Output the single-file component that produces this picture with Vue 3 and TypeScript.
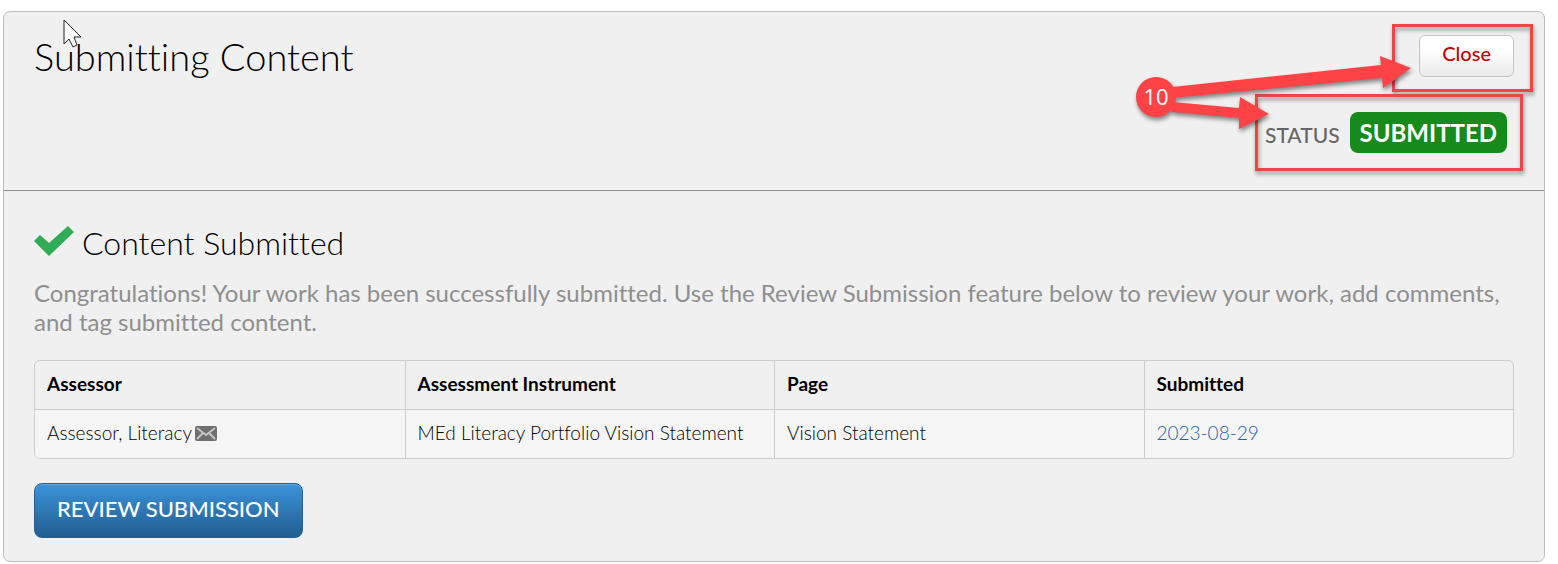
<script setup lang="ts">
interface Submission {
  assessor: string
  instrument: string
  page: string
  submitted: string
}

const columns: string[] = ['Assessor', 'Assessment Instrument', 'Page', 'Submitted']

const submissions: Submission[] = [
  {
    assessor: 'Assessor, Literacy',
    instrument: 'MEd Literacy Portfolio Vision Statement',
    page: 'Vision Statement',
    submitted: '2023-08-29',
  },
]
</script>

<template>
  <main class="panel">
    <header class="panel-header">
      <h1 class="title">Submitting Content</h1>
      <div class="actions">
        <button type="button" class="close">Close</button>
        <div class="status">
          <span class="status-label">STATUS</span>
          <strong class="badge">SUBMITTED</strong>
        </div>
      </div>
    </header>

    <section class="body">
      <h2 class="subtitle">
        <svg class="check" width="40" height="32" viewBox="0 0 40 32" aria-hidden="true">
          <path d="M0 16 L6 10 L15 18 L34 1 L40 7 L15 31 Z" fill="#2fac55" />
        </svg>
        <span>Content Submitted</span>
      </h2>
      <p class="message">
        Congratulations! Your work has been successfully submitted. Use the Review Submission
        feature below to review your work, add comments, and tag submitted content.
      </p>

      <table class="grid">
        <thead>
          <tr>
            <th v-for="column in columns" :key="column" scope="col">{{ column }}</th>
          </tr>
        </thead>
        <tbody>
          <tr v-for="item in submissions" :key="item.page">
            <td>
              <span class="person">
                {{ item.assessor }}
                <a href="#" class="mail" aria-label="Send message">
                  <svg width="22" height="15" viewBox="0 0 22 15" aria-hidden="true">
                    <rect width="22" height="15" rx="2" fill="#6f6f6f" />
                    <path
                      d="M2 2 L11 9 L20 2 M2 13 L8 7 M20 13 L14 7"
                      fill="none"
                      stroke="#c4c4c4"
                      stroke-width="2"
                    />
                  </svg>
                </a>
              </span>
            </td>
            <td>{{ item.instrument }}</td>
            <td>{{ item.page }}</td>
            <td><a href="#" class="date">{{ item.submitted }}</a></td>
          </tr>
        </tbody>
      </table>

      <button type="button" class="review">REVIEW SUBMISSION</button>
    </section>

    <svg class="callout" width="420" height="180" viewBox="0 0 420 180" aria-hidden="true">
      <g class="marks">
        <rect x="269.5" y="13.5" width="138" height="65" />
        <rect x="132.5" y="83.5" width="265" height="74" />
      </g>
      <g class="arrows">
        <path d="M48 75 L257 53 L256 44 L287 56 L259 76 L258 66 L48 86 Z" />
        <path d="M48 90 L115 96 L116 85 L145 102 L115 117 L115 106 L48 100 Z" />
        <circle cx="32" cy="85" r="20" />
      </g>
      <text x="32" y="93" text-anchor="middle">10</text>
    </svg>

    <svg class="pointer" width="20" height="29" viewBox="0 0 20 29" aria-hidden="true">
      <path
        d="M1 1 V25 L6 20 L10 28 L14 26 L11 18 H18 Z"
        fill="#fff"
        stroke="#222"
        stroke-width="1"
      />
    </svg>
  </main>
</template>

<style>
body {
  margin: 0;
  background: #fff;
}
</style>

<style scoped>
.panel {
  position: relative;
  box-sizing: border-box;
  margin: 11px 13px 2px 3px;
  border: 1px solid #bcbcbc;
  border-radius: 7px;
  background: #f0f0f0;
  color: #000;
  font-family: Lato, "Open Sans", sans-serif;
  font-variant-ligatures: none;
}

.panel-header {
  display: flex;
  justify-content: space-between;
  padding: 23px 30px 37px;
  border-bottom: 1px solid #8f8f8f;
}

.title {
  margin: 0;
  font-size: 38px;
  line-height: 43px;
  font-weight: 300;
}

.actions {
  display: flex;
  flex-direction: column;
  align-items: flex-end;
  gap: 35px;
}

.close {
  box-sizing: border-box;
  height: 42px;
  padding: 0 22px 6px;
  border: 1px solid #c4c4c4;
  border-radius: 6px;
  background: linear-gradient(#fff 35%, #e9e9e9);
  color: #c40000;
  font: 500 20px Lato, sans-serif;
}

.status {
  display: flex;
  align-items: center;
  gap: 10px;
  margin-right: 7px;
}

.status-label {
  padding-top: 4px;
  color: #666;
  font-size: 21px;
  font-weight: 500;
}

.badge {
  padding: 0 10px;
  border-radius: 8px;
  background: #178a1c;
  color: #fff;
  font-size: 24px;
  line-height: 41px;
  font-weight: 700;
}

.body {
  padding: 34px 30px 23px;
}

.subtitle {
  display: flex;
  gap: 8px;
  margin: 0 0 17px;
  font-size: 32px;
  line-height: 36px;
  font-weight: 300;
}

.message {
  margin: 0 0 24px;
  color: #8f8f8f;
  font-size: 24px;
  line-height: 29px;
  font-weight: 400;
}

.grid {
  width: 100%;
  table-layout: fixed;
  border: 1px solid #ccc;
  border-radius: 6px;
  border-spacing: 0;
  overflow: hidden;
  font-size: 19px;
  line-height: 24px;
}

.grid th,
.grid td {
  padding: 11px 12px 13px;
  text-align: left;
}

.grid th {
  font-weight: 700;
}

.grid td {
  border-top: 1px solid #ccc;
  background: #f5f5f5;
  font-weight: 300;
}

.grid th + th,
.grid td + td {
  border-left: 1px solid #ccc;
}

.person {
  display: flex;
  align-items: center;
  gap: 3px;
}

.mail {
  display: flex;
}

.date {
  color: #1f62a3;
  text-decoration: none;
}

.review {
  box-sizing: border-box;
  height: 55px;
  margin-top: 24px;
  padding: 0 22px 5px;
  border: 1px solid #235f93;
  border-radius: 8px;
  background: linear-gradient(#3b93da, #215d8f);
  box-shadow: inset 0 1px 0 #62a9e2;
  color: #fff;
  font: 500 22px Lato, sans-serif;
}

.callout {
  position: absolute;
  top: 0;
  right: 0;
  pointer-events: none;
}

.marks {
  fill: none;
  stroke: #ee4547;
  stroke-width: 3;
  filter: drop-shadow(1px 3px 2px rgb(0 0 0 / 40%));
}

.arrows {
  fill: #fd4345;
  filter: drop-shadow(1px 3px 2px rgb(0 0 0 / 45%));
}

.callout text {
  fill: #fff;
  font: 22px "Open Sans", sans-serif;
}

.pointer {
  position: absolute;
  top: 7px;
  left: 59px;
  pointer-events: none;
}
</style>
